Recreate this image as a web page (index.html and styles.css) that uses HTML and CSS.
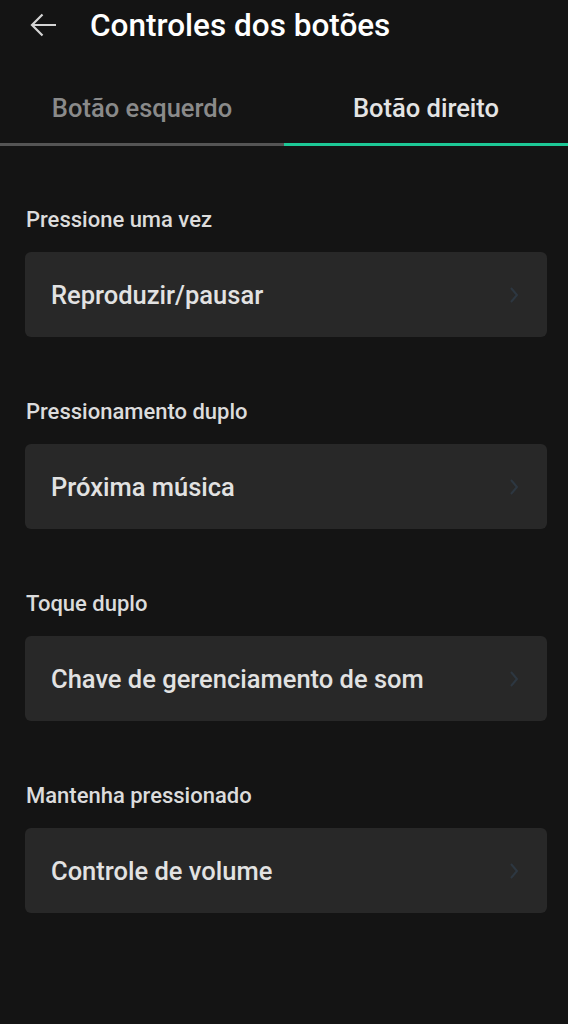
FILE: index.html
```html
<!DOCTYPE html>
<html>

<head>
    <meta charset="utf-8">
    <meta name="viewport" content="width=device-width, initial-scale=1">
    <title>Controles dos botões</title>
    <link rel="stylesheet" href="styles.css">
</head>

<body>
    <div class="header">
        <svg class="back" width="28" height="26" viewBox="0 0 28 26">
            <path d="M27 13H3M13.5 2.5L3 13L13.5 23.5" fill="none" stroke="#d4d4d4" stroke-width="2.2" />
        </svg>
        <h1 class="title">Controles dos botões</h1>
    </div>

    <div class="tabs">
        <div class="tab">Botão esquerdo</div>
        <div class="tab active">Botão direito</div>
    </div>

    <div class="content">
        <div class="section">
            <p class="section-label">Pressione uma vez</p>
            <div class="card">
                <span class="card-text">Reproduzir/pausar</span>
                <svg class="chevron" width="10" height="18" viewBox="0 0 10 18">
                    <path d="M2 2l6 7-6 7" fill="none" stroke="#2d3741" stroke-width="2" />
                </svg>
            </div>
        </div>
        <div class="section">
            <p class="section-label">Pressionamento duplo</p>
            <div class="card">
                <span class="card-text">Próxima música</span>
                <svg class="chevron" width="10" height="18" viewBox="0 0 10 18">
                    <path d="M2 2l6 7-6 7" fill="none" stroke="#2d3741" stroke-width="2" />
                </svg>
            </div>
        </div>
        <div class="section">
            <p class="section-label">Toque duplo</p>
            <div class="card">
                <span class="card-text">Chave de gerenciamento de som</span>
                <svg class="chevron" width="10" height="18" viewBox="0 0 10 18">
                    <path d="M2 2l6 7-6 7" fill="none" stroke="#2d3741" stroke-width="2" />
                </svg>
            </div>
        </div>
        <div class="section">
            <p class="section-label">Mantenha pressionado</p>
            <div class="card">
                <span class="card-text">Controle de volume</span>
                <svg class="chevron" width="10" height="18" viewBox="0 0 10 18">
                    <path d="M2 2l6 7-6 7" fill="none" stroke="#2d3741" stroke-width="2" />
                </svg>
            </div>
        </div>
    </div>
</body>

</html>
```

FILE: styles.css
```css
html,
body {
    margin: 0;
    min-height: 100%;
}

body {
    background-color: #141414;
    color: #e0e0e0;
    font-family: Roboto, "Noto Sans", sans-serif;
}

.header {
    display: flex;
    align-items: center;
    height: 50px;
    padding-left: 29px;
}

.back {
    display: block;
}

.title {
    margin: 0 0 0 33px;
    font-size: 31.5px;
    font-weight: 500;
    color: #fff;
}

.tabs {
    display: flex;
    margin-top: 30px;
}

.tab {
    flex: 1;
    height: 63px;
    line-height: 56px;
    text-align: center;
    font-size: 25.5px;
    font-weight: 500;
    color: #8a8a8a;
    border-bottom: 3px solid #555;
}

.tab.active {
    color: #e4e4e4;
    border-bottom-color: #1dc997;
}

.content {
    padding: 61px 21px 0 25px;
}

.section {
    margin-bottom: 62px;
}

.section-label {
    margin: 0 0 20px 1px;
    font-size: 22px;
    font-weight: 500;
    color: #dcdcdc;
}

.card {
    display: flex;
    align-items: center;
    justify-content: space-between;
    height: 85px;
    padding: 0 28px 0 26px;
    background-color: #282828;
    border-radius: 6px;
}

.card-text {
    font-size: 25.5px;
    font-weight: 500;
    color: #e2e2e2;
}

.chevron {
    display: block;
}
```
